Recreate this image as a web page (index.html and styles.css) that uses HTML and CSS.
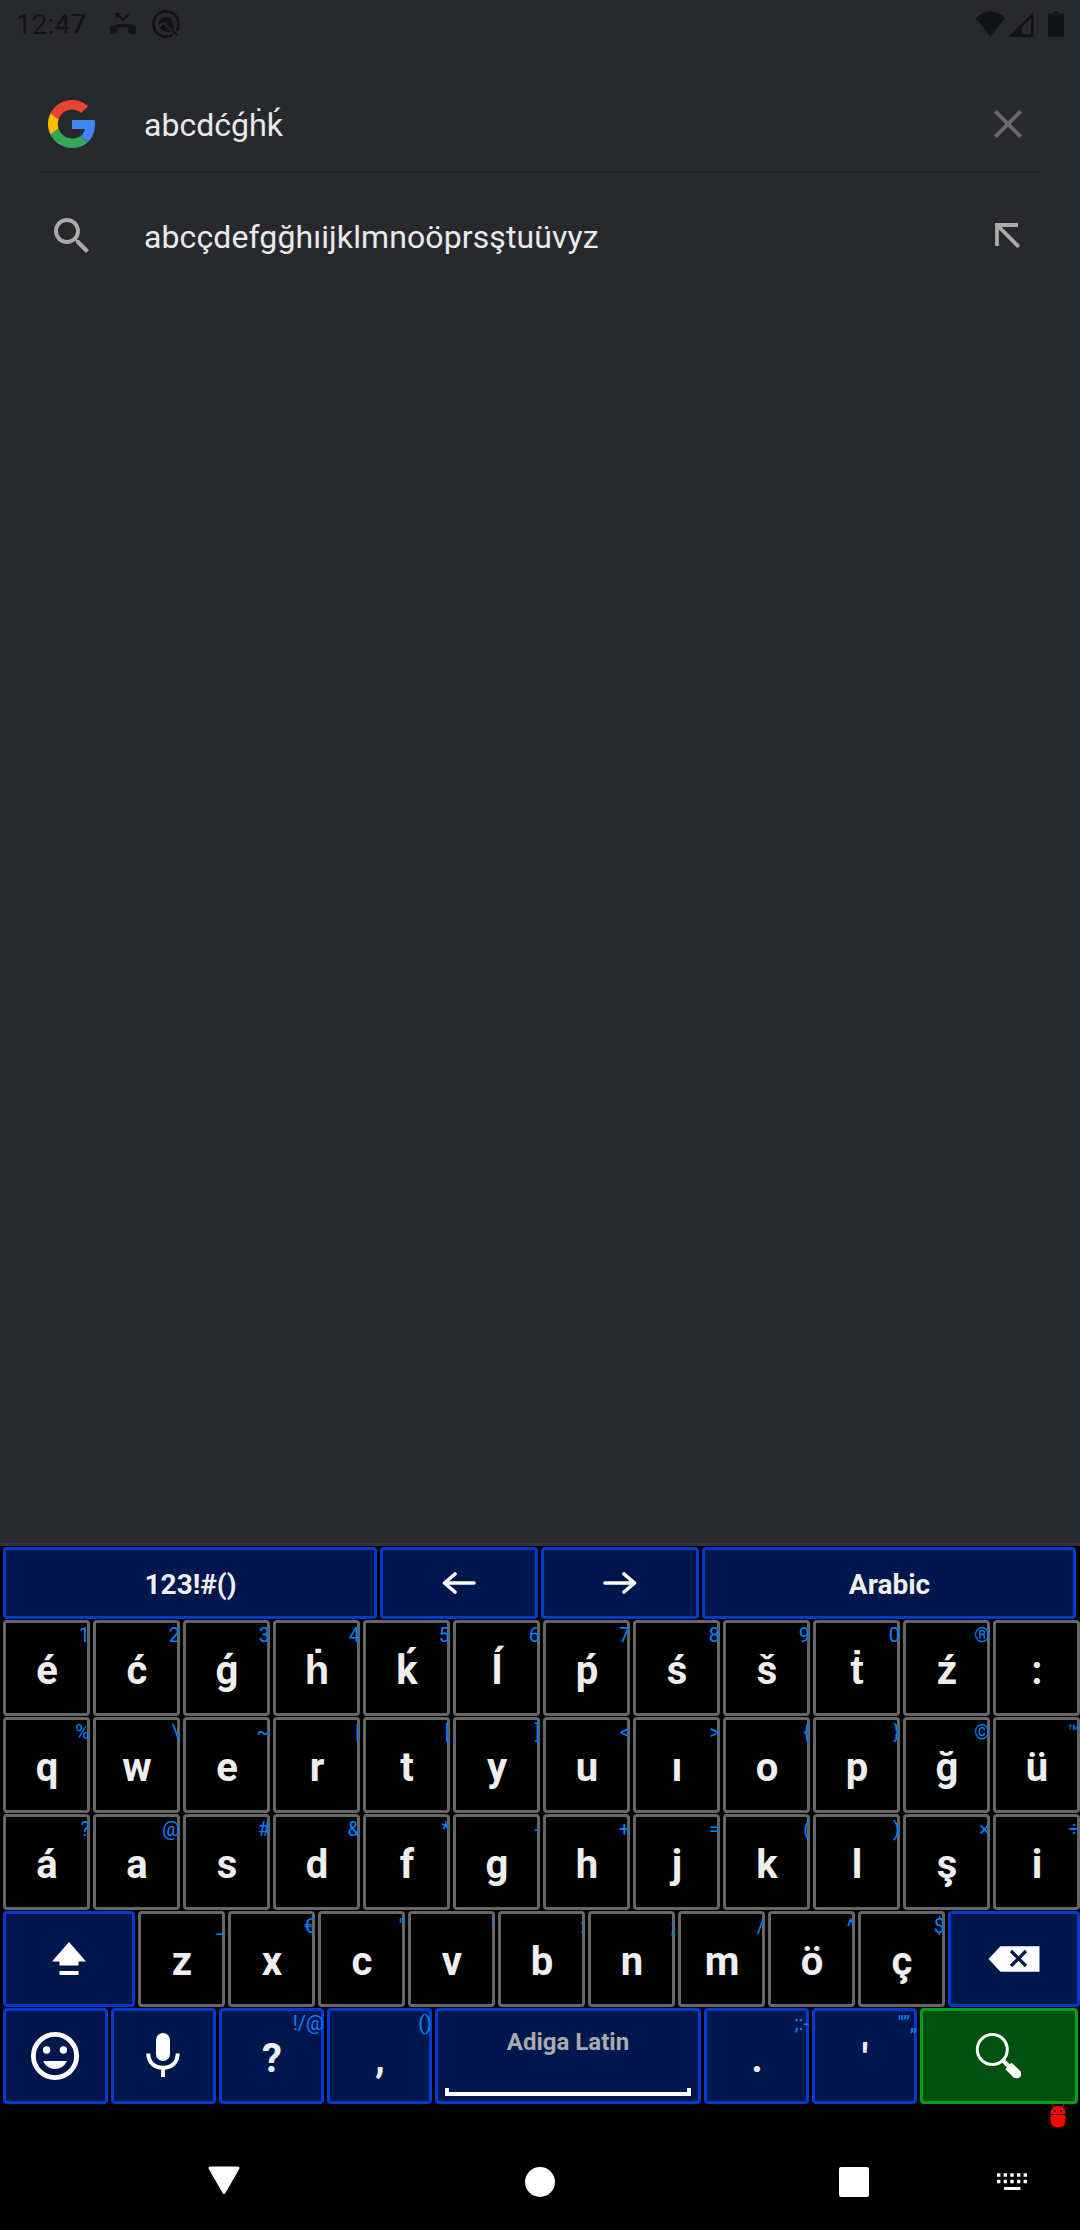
FILE: index.html
```html
<!DOCTYPE html>
<html lang="en">
<head>
<meta charset="utf-8">
<title>Search</title>
<link rel="stylesheet" href="styles.css">
</head>
<body>
<div class="screen">
  <header class="status">
    <span class="clock">12:47</span>
    <svg class="st-call" width="28" height="24" viewBox="0 0 28 24"><path d="M8 2.500L14 7.700L21 1.300" fill="none" stroke="currentColor" stroke-width="2.200"/><path d="M6.500 1H12.500L6.500 7ZM1 18.500Q0 15.500 3 14Q14 9.500 25 14Q28 15.500 27 18.500V20.500Q26.500 22.800 25 22.300L20.500 21.300Q19.500 20.800 19.500 20V16Q14 14 8.500 16V20Q8.500 20.800 7.500 21.300L3 22.300Q1.500 22.800 1 20.500Z" fill="currentColor"/></svg>
    <svg class="st-q" width="28" height="28" viewBox="0 0 28 28"><path d="M20.800 24.600A12.600 12.600 0 1 1 24.600 20.800" fill="none" stroke="currentColor" stroke-width="2.600"/><path d="M20.500 20.500L25.500 25.500" stroke="currentColor" stroke-width="2.600"/><path d="M6.500 14.500A7.500 7.500 0 1 1 21.500 14.500V21L12 12Z" fill="currentColor"/><path d="M8 17.500L11.500 14L19 21.300Q12 23.500 8 17.500Z" fill="currentColor"/></svg>
    <span class="grow"></span>
    <svg class="st-wifi" width="31" height="26" viewBox="0 0 31 26"><path d="M0.500 7Q15.500-6.500 30.500 7L15.500 25.500Z" fill="currentColor"/></svg>
    <svg class="st-cell" width="26" height="25" viewBox="0 0 26 25"><path d="M0 25L25.500 0V25ZM13.800 14.500V22.200H23V6Z" fill="currentColor" fill-rule="evenodd"/></svg>
    <svg class="st-batt" width="16" height="26" viewBox="0 0 16 26"><path d="M5 0H11V2.500H14.500Q16 2.500 16 4V24.500Q16 26 14.500 26H1.500Q0 26 0 24.500V4Q0 2.500 1.500 2.500H5Z" fill="currentColor"/></svg>
  </header>

  <main class="results">
    <div class="row query">
      <svg class="google" viewBox="0 0 48 48"><path fill="#EA4335" d="M24 9.500c3.540 0 6.710 1.220 9.210 3.600l6.850-6.850C35.900 2.380 30.470 0 24 0 14.620 0 6.510 5.380 2.560 13.220l7.980 6.190C12.430 13.720 17.740 9.500 24 9.500z"/><path fill="#4285F4" d="M46.980 24.550c0-1.570-.15-3.090-.38-4.550H24v9.020h12.940c-.58 2.960-2.260 5.480-4.780 7.180l7.730 6c4.510-4.180 7.090-10.360 7.090-17.650z"/><path fill="#FBBC05" d="M10.530 28.590c-.48-1.450-.76-2.990-.76-4.590s.27-3.140.76-4.590l-7.980-6.190C.92 16.460 0 20.120 0 24c0 3.880.92 7.540 2.560 10.780l7.970-6.190z"/><path fill="#34A853" d="M24 48c6.480 0 11.930-2.130 15.890-5.810l-7.730-6c-2.150 1.450-4.920 2.300-8.160 2.300-6.260 0-11.570-4.220-13.470-9.910l-7.980 6.190C6.510 42.620 14.620 48 24 48z"/></svg>
      <span class="text">abcdćǵḣḱ</span>
      <svg class="ic close" viewBox="0 0 24 24"><path d="M19 6.410L17.590 5 12 10.590 6.410 5 5 6.410 10.590 12 5 17.590 6.410 19 12 13.410 17.590 19 19 17.590 13.410 12z" fill="currentColor"/></svg>
    </div>
    <div class="row suggestion">
      <svg class="ic lens" viewBox="0 0 24 24"><path d="M15.500 14h-.79l-.28-.27C15.410 12.590 16 11.110 16 9.500 16 5.910 13.090 3 9.500 3S3 5.910 3 9.500 5.910 16 9.500 16c1.610 0 3.090-.59 4.230-1.570l.27.280v.79l5 4.990L20.490 19l-4.990-5zm-6 0C7.010 14 5 11.990 5 9.500S7.010 5 9.500 5 14 7.010 14 9.500 11.990 14 9.500 14z" fill="currentColor"/></svg>
      <span class="text">abcçdefgğhıijklmnoöprsştuüvyz</span>
      <svg class="ic insert" viewBox="0 0 48 48"><path d="M13 34V13H34M14 14L34.800 34.800" fill="none" stroke="currentColor" stroke-width="3.800"/></svg>
    </div>
  </main>

  <section class="keyboard">
    <div class="keys top">
      <div class="key fn"><b>123!#()</b></div>
      <div class="key fn left"><svg width="34" height="22" viewBox="0 0 34 22"><path d="M2.500 11H32M13 2L2.500 11L13 20" fill="none" stroke="#fff" stroke-width="3.600" stroke-linecap="round" stroke-linejoin="round"/></svg></div>
      <div class="key fn"><svg width="34" height="22" viewBox="0 0 34 22"><path d="M31.500 11H2M21 2L31.500 11L21 20" fill="none" stroke="#fff" stroke-width="3.600" stroke-linecap="round" stroke-linejoin="round"/></svg></div>
      <div class="key fn"><b>Arabic</b></div>
    </div>
    <div class="keys twelve">
      <div class="key"><b>é</b><i>1</i></div><div class="key"><b>ć</b><i>2</i></div><div class="key"><b>ǵ</b><i>3</i></div><div class="key"><b>ḣ</b><i>4</i></div>
      <div class="key"><b>ḱ</b><i>5</i></div><div class="key"><b>ĺ</b><i>6</i></div><div class="key"><b>ṕ</b><i>7</i></div><div class="key"><b>ś</b><i>8</i></div>
      <div class="key"><b>š</b><i>9</i></div><div class="key"><b>ṫ</b><i>0</i></div><div class="key"><b>ź</b><i>®</i></div><div class="key"><b>:</b></div>
    </div>
    <div class="keys twelve">
      <div class="key"><b>q</b><i>%</i></div><div class="key"><b>w</b><i>\</i></div><div class="key"><b>e</b><i>~</i></div><div class="key"><b>r</b><i>|</i></div>
      <div class="key"><b>t</b><i>[</i></div><div class="key"><b>y</b><i>]</i></div><div class="key"><b>u</b><i>&lt;</i></div><div class="key"><b>ı</b><i>&gt;</i></div>
      <div class="key"><b>o</b><i>{</i></div><div class="key"><b>p</b><i>}</i></div><div class="key"><b>ğ</b><i>©</i></div><div class="key"><b>ü</b><i>™</i></div>
    </div>
    <div class="keys twelve">
      <div class="key"><b>á</b><i>?</i></div><div class="key"><b>a</b><i>@</i></div><div class="key"><b>s</b><i>#</i></div><div class="key"><b>d</b><i>&amp;</i></div>
      <div class="key"><b>f</b><i>*</i></div><div class="key"><b>g</b><i>-</i></div><div class="key"><b>h</b><i>+</i></div><div class="key"><b>j</b><i>=</i></div>
      <div class="key"><b>k</b><i>(</i></div><div class="key"><b>l</b><i>)</i></div><div class="key"><b>ş</b><i>×</i></div><div class="key"><b>i</b><i>÷</i></div>
    </div>
    <div class="keys shift-row">
      <div class="key fn"><svg width="36" height="36" viewBox="0 0 36 36"><path d="M18 1L35 20.500H27.500V24.500H8.500V20.500H1ZM8.500 30H27.500V34H8.500Z" fill="#fff"/></svg></div>
      <div class="key"><b>z</b><i>_</i></div><div class="key"><b>x</b><i>€</i></div><div class="key"><b>c</b><i>"</i></div>
      <div class="key"><b>v</b><i>'</i></div><div class="key"><b>b</b><i>:</i></div><div class="key"><b>n</b><i>;</i></div>
      <div class="key"><b>m</b><i>/</i></div><div class="key"><b>ö</b><i>^</i></div><div class="key"><b>ç</b><i>$</i></div>
      <div class="key fn del"><svg width="52" height="26" viewBox="0 0 52 26"><path d="M0.500 13L12.500 0.200H51.500V25.800H12.500Z" fill="#fff"/><path d="M23 5L38 20M38 5L23 20" stroke="#00174d" stroke-width="3.200"/></svg></div>
    </div>
    <div class="keys bottom">
      <div class="key fn left"><svg width="48" height="48" viewBox="0 0 48 48"><circle cx="24" cy="24" r="21.600" fill="none" stroke="#fff" stroke-width="4.800"/><circle cx="15.600" cy="18" r="3.700" fill="#fff"/><circle cx="32.400" cy="18" r="3.700" fill="#fff"/><path d="M12 29H36Q32 37 24 37T12 29Z" fill="#fff"/></svg></div>
      <div class="key fn left mic"><svg width="34" height="46" viewBox="0 0 34 46"><rect x="10" y="1" width="14" height="28" rx="7" fill="#fff"/><path d="M2.300 21.500C2.300 31 9 35.700 17 35.700S31.700 31 31.700 21.500M17 36V45" fill="none" stroke="#fff" stroke-width="4"/></svg></div>
      <div class="key fn"><b>?</b><i>!/@</i></div>
      <div class="key fn"><b>,</b><i>()</i></div>
      <div class="key fn space"><span class="lang">Adiga Latin</span><span class="bar"></span></div>
      <div class="key fn"><b>.</b><i>;:-</i></div>
      <div class="key fn"><b>'</b><i>"”„</i></div>
      <div class="key go"><svg width="48" height="48" viewBox="0 0 48 48"><circle cx="17.300" cy="17.500" r="15" fill="none" stroke="#fff" stroke-width="3"/><path d="M27.500 28L33 33.500" stroke="#fff" stroke-width="4"/><path d="M33.500 34L42.500 43" stroke="#fff" stroke-width="9"/><path d="M36 36L42 42" stroke="#fff" stroke-width="8.500" stroke-linecap="round"/></svg></div>
    </div>
    <div class="bug-row"><svg width="16" height="24" viewBox="0 0 16 24"><path d="M2 0.500L4 3M14 0.500L12 3" stroke="#f00" stroke-width="1.200"/><path d="M0.500 10Q0.500 2 8 2T15.500 10ZM0.500 11H15.500V16Q15.500 23.500 8 23.500T0.500 16Z" fill="#f00"/><path d="M4 6H6V8H4ZM10 6H12V8H10Z" fill="#300"/></svg></div>
  </section>

  <nav class="nav">
    <svg class="back" width="34" height="30" viewBox="0 0 34 30"><path d="M3 2H31L17 26.500Z" fill="#fff" stroke="#fff" stroke-width="3" stroke-linejoin="round"/></svg>
    <span class="home"></span>
    <span class="recent"></span>
    <svg class="ime" width="30" height="18" viewBox="0 0 30 18"><path d="M0 2H30M0 8.500H30" stroke="#fff" stroke-width="3.400" stroke-dasharray="3.400 3.250"/><path d="M7 15.500H23.500" stroke="#fff" stroke-width="3"/></svg>
  </nav>
</div>
</body>
</html>
```
FILE: styles.css
```css
* { box-sizing: border-box; }
body { margin: 0; background: #000; }
svg { display: block; flex: none; }
.screen {
  width: 1080px;
  height: 2230px;
  display: flex;
  flex-direction: column;
  background: #28292c;
  font-family: Roboto, "Liberation Sans", sans-serif;
  overflow: hidden;
}

/* status bar */
.status {
  height: 60px;
  padding: 10px 16px 0 16px;
  display: flex;
  align-items: flex-start;
  color: #121315;
}
.clock { width: 93px; font-size: 28px; line-height: 30px; letter-spacing: 0.1px; }
.st-call { margin: 2px 15px 0 0; }
.grow { flex: 1; }
.st-wifi { margin: 1px 2px 0 0; }
.st-cell { margin: 2px 14px 0 0; }
.st-batt { margin-top: 1px; }

/* search field and suggestions */
.results { height: 1483px; padding: 0 40px; }
.row { display: flex; align-items: center; color: #e8eaed; }
.query { height: 113px; border-bottom: 2px solid #222326; padding: 17px 8px 0; }
.suggestion { height: 126px; padding: 0 8px; }
.google { width: 48px; height: 48px; margin-right: 48px; }
.text { flex: 1; font-size: 32px; line-height: 40px; padding-top: 2px; }
.suggestion .text { letter-spacing: 0.1px; }
.ic { width: 48px; height: 48px; color: #aaa; }
.lens { margin-right: 48px; }
.close { color: #696969; }

/* keyboard */
.keyboard {
  border-top: 3px solid #323232;
  background: #000;
  padding: 1px 0 0 3px;
  display: flex;
  flex-direction: column;
  gap: 1px;
  height: 597px;
}
.keys { display: grid; gap: 3px; height: 96px; flex: none; }
.top { height: 72px; grid-template-columns: 374px 158px 158px 374px; }
.twelve { grid-template-columns: repeat(12, 87px); }
.shift-row { grid-template-columns: 132px repeat(9, 87px) 132px; }
.bottom { grid-template-columns: repeat(4, 105px) 266px 105px 105px 158px; }
.key {
  position: relative;
  border: 3px solid #666;
  border-radius: 4px;
  background: #000;
  color: #eee;
  display: flex;
  align-items: center;
  justify-content: center;
}
.fn { background: #00174d; border-color: #003bd1; }
.go { background: #00500f; border-color: #00a01f; }
.key b { font-size: 40px; line-height: 48px; padding: 5px 0 0 1px; }
.top .key b { font-size: 28px; line-height: 32px; padding-top: 3px; }
.key i {
  position: absolute;
  top: 0;
  right: -3px;
  font-size: 20px;
  font-style: normal;
  line-height: 24px;
  color: #0084ff;
}
.key.space { flex-direction: column; align-items: stretch; justify-content: space-between; padding: 17px 7px 5px; }
.lang { font-size: 24px; line-height: 28px; font-weight: 700; color: #aaa; text-align: center; }
.bar { height: 8px; border: 4px solid #fff; border-top: 0; }
.left svg { margin-right: 1px; }
.mic svg { margin-top: -2px; }
.del svg { margin-bottom: 1px; }
.bug-row { display: flex; justify-content: flex-end; padding-right: 14px; margin-top: -1px; }

/* navigation bar */
.nav {
  flex: 1;
  background: #000;
  display: flex;
  align-items: center;
  padding: 0 53px 6px 207px;
}
.back { margin-bottom: 3px; }
.home { width: 30px; height: 30px; border-radius: 50%; background: #fff; margin-left: 284px; }
.recent { width: 30px; height: 30px; border-radius: 2px; background: #fff; margin-left: 284px; }
.ime { margin-left: 128px; }
```
